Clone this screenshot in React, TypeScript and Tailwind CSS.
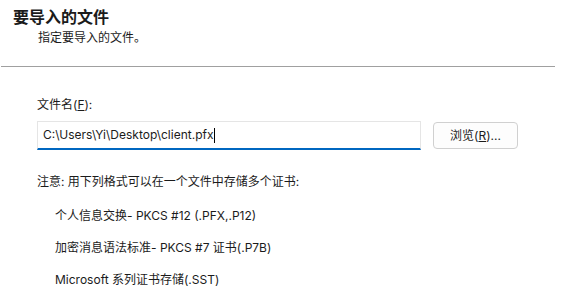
import React from "react";

const formats = [
  "个人信息交换- PKCS #12 (.PFX,.P12)",
  "加密消息语法标准- PKCS #7 证书(.P7B)",
  "Microsoft 系列证书存储(.SST)",
];

const App = () => {
  return (
    <main className="w-[578px] h-[303px] bg-white text-[#1b1b1b] overflow-hidden font-['Inter','Noto_Sans_CJK_SC',sans-serif]">
      <header className="h-[66px] pl-[13px] pt-[7px]">
        <h1 className="text-[16px] leading-[20px] font-bold">要导入的文件</h1>
        <p className="pl-[25px] mt-[3px] text-[12px] leading-[16px]">
          指定要导入的文件。
        </p>
      </header>
      <div className="ml-[1px] w-[554px] h-px bg-[#a0a0a0]" />

      <section className="pl-[37px] pt-[30px]">
        <p className="text-[12px] leading-[16px]">
          文件名(<span className="underline">F</span>):
        </p>
        <div className="flex items-center mt-[8px] gap-[12px]">
          <div className="w-[384px] h-[29px] border border-[#e5e5e5] border-b-2 border-b-[#0067c0] flex items-center pl-[5px] text-[12px]">
            <span>C:\Users\Yi\Desktop\client.pfx</span>
            <span className="w-px h-[15px] bg-black ml-[1px]" />
          </div>
          <button className="w-[85px] h-[27px] rounded-[4px] border border-[#d0d0d0] bg-[#fdfdfd] text-[12px]">
            浏览(<span className="underline">R</span>)...
          </button>
        </div>

        <p className="mt-[24px] text-[12px] leading-[16px]">
          注意: 用下列格式可以在一个文件中存储多个证书:
        </p>
        <ul className="pl-[18px] mt-[18px] flex flex-col gap-[16px]">
          {formats.map((f) => (
            <li key={f} className="text-[12px] leading-[16px]">
              {f}
            </li>
          ))}
        </ul>
      </section>
    </main>
  );
};

export default App;
